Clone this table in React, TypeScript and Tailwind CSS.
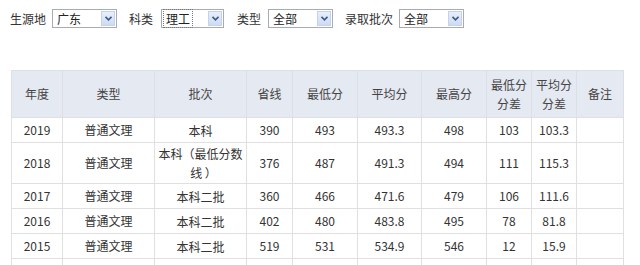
import React from 'react';

type Row = {
  year: string;
  kind: string;
  batch: React.ReactNode;
  tall?: boolean;
  line: string;
  min: string;
  avg: string;
  max: string;
  minDiff: string;
  avgDiff: string;
  note: string;
};

const rows: Row[] = [
  { year: '2019', kind: '普通文理', batch: '本科', line: '390', min: '493', avg: '493.3', max: '498', minDiff: '103', avgDiff: '103.3', note: '' },
  {
    year: '2018',
    kind: '普通文理',
    batch: (
      <div className="flex flex-col items-center">
        <span>本科（最低分数</span>
        <span className="pl-[6px]">线 ）</span>
      </div>
    ),
    tall: true,
    line: '376', min: '487', avg: '491.3', max: '494', minDiff: '111', avgDiff: '115.3', note: '',
  },
  { year: '2017', kind: '普通文理', batch: '本科二批', line: '360', min: '466', avg: '471.6', max: '479', minDiff: '106', avgDiff: '111.6', note: '' },
  { year: '2016', kind: '普通文理', batch: '本科二批', line: '402', min: '480', avg: '483.8', max: '495', minDiff: '78', avgDiff: '81.8', note: '' },
  { year: '2015', kind: '普通文理', batch: '本科二批', line: '519', min: '531', avg: '534.9', max: '546', minDiff: '12', avgDiff: '15.9', note: '' },
  // next row is cut off by the bottom of the view, only its borders show
  { year: '', kind: '', batch: '', line: '', min: '', avg: '', max: '', minDiff: '', avgDiff: '', note: '' },
];

const widths = [51, 92, 92, 46, 65, 64, 65, 45, 45, 47];

function FakeSelect({ value, width, selected }: { value: string; width: number; selected?: boolean }) {
  return (
    <div
      className="flex h-[19px] items-center border border-[#a7abb3] bg-white pl-[2px]"
      style={{ width }}
    >
      <span className="flex-1">
        <span className={`px-[2px] text-[12px] leading-[14px] text-[#222] ${selected ? 'outline outline-1 outline-dotted outline-[#777]' : ''}`}>
          {value}
        </span>
      </span>
      <span className="mr-[1px] flex h-[15px] w-[14px] items-center justify-center border border-[#c3d3ec] bg-gradient-to-b from-[#e9effb] to-[#cddbf3]">
        <svg width="7" height="5" viewBox="0 0 7 5">
          <path d="M0.5 0.8 L3.5 3.8 L6.5 0.8" fill="none" stroke="#3d5a8c" strokeWidth="1.6" />
        </svg>
      </span>
    </div>
  );
}

export default function App() {
  return (
    <div className="h-[265px] w-[640px] overflow-hidden bg-white text-[12px] text-[#333]" style={{ fontFamily: '"Microsoft YaHei", "Noto Sans CJK SC", sans-serif' }}>
      <div className="flex h-[37px] items-center pl-[10px]">
        <span className="mr-[6px]">生源地</span>
        <FakeSelect value="广东" width={65} />
        <span className="ml-[12px] mr-[8px]">科类</span>
        <FakeSelect value="理工" width={63} selected />
        <span className="ml-[13px] mr-[7px]">类型</span>
        <FakeSelect value="全部" width={65} />
        <span className="ml-[12px] mr-[6px]">录取批次</span>
        <FakeSelect value="全部" width={65} />
      </div>
      <div className="pl-[11px] pt-[33px]">
        <table className="table-fixed border-collapse text-center" style={{ width: 612 }}>
          <colgroup>
            {widths.map((w, i) => (
              <col key={i} style={{ width: w }} />
            ))}
          </colgroup>
          <thead>
            <tr className="h-[47px] border-b border-[#cfd0e0] bg-[#e5e9f1] text-[#444]">
              <th className="border border-[#dcdfe6] font-normal">年度</th>
              <th className="border border-[#dcdfe6] font-normal">类型</th>
              <th className="border border-[#dcdfe6] font-normal">批次</th>
              <th className="border border-[#dcdfe6] font-normal">省线</th>
              <th className="border border-[#dcdfe6] font-normal">最低分</th>
              <th className="border border-[#dcdfe6] font-normal">平均分</th>
              <th className="border border-[#dcdfe6] font-normal">最高分</th>
              <th className="border border-[#dcdfe6] font-normal leading-[19px]">最低分<br />分差</th>
              <th className="border border-[#dcdfe6] font-normal leading-[19px]">平均分<br />分差</th>
              <th className="border border-[#dcdfe6] font-normal">备注</th>
            </tr>
          </thead>
          <tbody>
            {rows.map((r, i) => (
              <tr key={i} className={r.tall ? 'h-[41px]' : 'h-[25px]'}>
                <td className="border border-[#e0e0e0]">{r.year}</td>
                <td className="border border-[#e0e0e0]">{r.kind}</td>
                <td className="border border-[#e0e0e0] leading-[19px]">{r.batch}</td>
                <td className="border border-[#e0e0e0]">{r.line}</td>
                <td className="border border-[#e0e0e0]">{r.min}</td>
                <td className="border border-[#e0e0e0]">{r.avg}</td>
                <td className="border border-[#e0e0e0]">{r.max}</td>
                <td className="border border-[#e0e0e0]">{r.minDiff}</td>
                <td className="border border-[#e0e0e0]">{r.avgDiff}</td>
                <td className="border border-[#e0e0e0]">{r.note}</td>
              </tr>
            ))}
          </tbody>
        </table>
      </div>
    </div>
  );
}
